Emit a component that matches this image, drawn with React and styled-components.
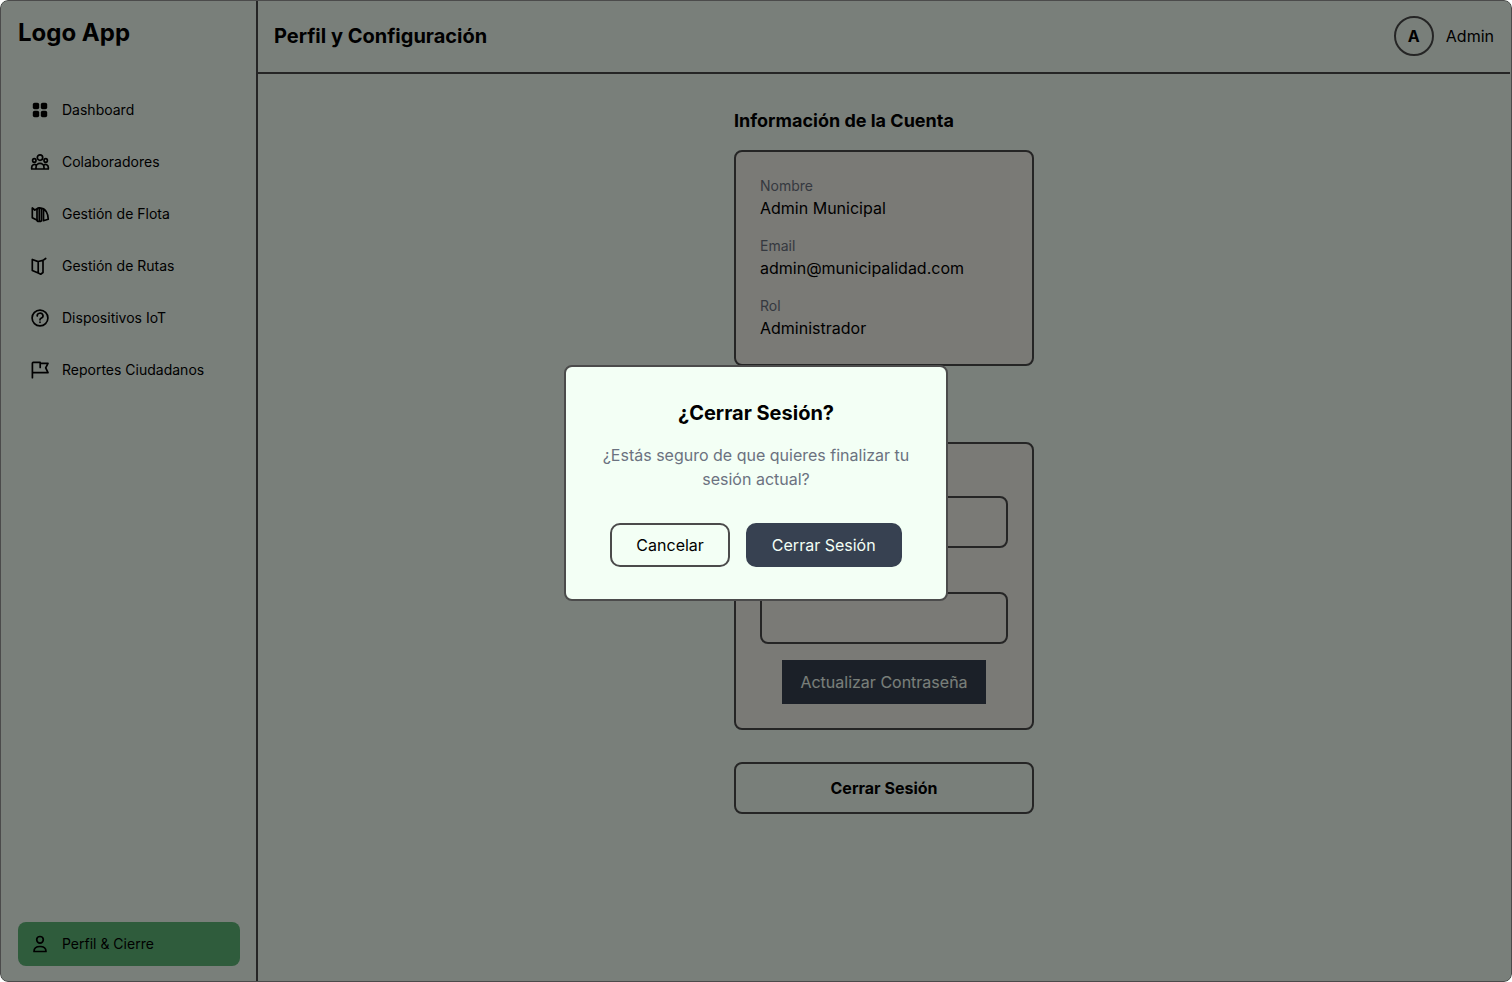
import React from 'react';
import styled, { createGlobalStyle, css } from 'styled-components';

const color = {
  surface: '#f3fff5',
  card: '#f5f4ec',
  line: '#4b4b4b',
  ink: '#000000',
  muted: '#6b7280',
  primary: '#374151',
  active: '#5eb878',
};

const GlobalStyle = createGlobalStyle`
  *, *::before, *::after { box-sizing: border-box; }
  body {
    margin: 0;
    background: #ffffff;
    color: ${color.ink};
    font-family: Inter, "Liberation Sans", sans-serif;
    font-size: 16px;
    line-height: 24px;
  }
  h1, h2, p, dl, dd { margin: 0; }
  button, input { font: inherit; color: inherit; }
  button { cursor: pointer; }
`;

const Page = styled.div`
  position: relative;
  display: flex;
  min-height: 100vh;
  padding: 0 2px;
  background: ${color.surface};
  border-radius: 8px;
  overflow: hidden;
`;

const Sidebar = styled.aside`
  display: flex;
  flex-direction: column;
  flex: none;
  width: 256px;
  padding: 16px;
  border-right: 2px solid ${color.line};
`;

const Logo = styled.div`
  font-size: 24px;
  line-height: 34px;
  font-weight: 700;
`;

const Nav = styled.nav`
  display: flex;
  flex: 1;
  flex-direction: column;
  gap: 8px;
  margin-top: 38px;
`;

const NavLink = styled.a`
  display: flex;
  align-items: center;
  gap: 12px;
  padding: 12px;
  border-radius: 8px;
  color: inherit;
  font-size: 14px;
  line-height: 20px;
  text-decoration: none;
  ${({ $active }) => $active && css`
    margin-top: auto;
    background: ${color.active};
  `}
`;

const IconSvg = styled.svg`
  width: 20px;
  height: 20px;
  fill: none;
  stroke: currentColor;
  stroke-width: 1.7;
  stroke-linecap: round;
  stroke-linejoin: round;
`;

const Body = styled.div`
  display: flex;
  flex: 1;
  flex-direction: column;
`;

const Header = styled.header`
  display: flex;
  align-items: center;
  justify-content: space-between;
  padding: 16px;
  border-bottom: 2px solid ${color.line};
`;

const PageTitle = styled.h1`
  font-size: 20px;
  line-height: 28px;
  font-weight: 700;
`;

const Account = styled.div`
  display: flex;
  align-items: center;
  gap: 12px;
`;

const Avatar = styled.span`
  display: grid;
  place-items: center;
  width: 40px;
  height: 40px;
  border: 2px solid ${color.line};
  border-radius: 50%;
  font-weight: 700;
`;

const Content = styled.main`
  display: flex;
  flex-direction: column;
  gap: 32px;
  width: 300px;
  margin: 0 auto;
  padding: 32px 0;
`;

const Section = styled.section`
  display: flex;
  flex-direction: column;
  gap: 14px;
`;

const SectionTitle = styled.h2`
  font-size: 18px;
  line-height: 30px;
  font-weight: 700;
`;

const cardBox = css`
  display: flex;
  flex-direction: column;
  gap: 16px;
  padding: 24px;
  border: 2px solid ${color.line};
  border-radius: 8px;
  background: ${color.card};
`;

const DetailCard = styled.dl`${cardBox}`;
const FormCard = styled.form`${cardBox}`;

const DetailLabel = styled.dt`
  color: ${color.muted};
  font-size: 14px;
  line-height: 20px;
`;

const Field = styled.div`
  display: flex;
  flex-direction: column;
  gap: 8px;
`;

const FieldLabel = styled.label`
  font-size: 14px;
  line-height: 20px;
`;

const TextInput = styled.input`
  width: 100%;
  height: 52px;
  padding: 12px;
  border: 2px solid ${color.line};
  border-radius: 8px;
  background: transparent;
`;

const UpdateButton = styled.button`
  align-self: center;
  padding: 8px 16px;
  border: 2px solid ${color.primary};
  background: ${color.primary};
  color: ${color.surface};
`;

const LogoutButton = styled.button`
  padding: 12px 24px;
  border: 2px solid ${color.line};
  border-radius: 8px;
  background: transparent;
  font-weight: 700;
`;

const Overlay = styled.div`
  position: absolute;
  inset: 0;
  display: grid;
  place-items: center;
  padding-bottom: 16px;
  border: 1px solid ${color.line};
  border-radius: 8px;
  background: rgba(0, 0, 0, 0.5);
`;

const Dialog = styled.div`
  display: flex;
  flex-direction: column;
  width: 384px;
  padding: 32px;
  border: 2px solid ${color.line};
  border-radius: 8px;
  background: ${color.surface};
  text-align: center;
`;

const DialogTitle = styled.h2`
  font-size: 20px;
  line-height: 28px;
  font-weight: 700;
`;

const DialogText = styled.p`
  margin-top: 16px;
  color: ${color.muted};
`;

const DialogActions = styled.div`
  display: flex;
  justify-content: center;
  gap: 16px;
  margin-top: 32px;
`;

const DialogButton = styled.button`
  padding: 8px 24px;
  border: 2px solid ${({ $primary }) => ($primary ? color.primary : color.line)};
  border-radius: 10px;
  background: ${({ $primary }) => ($primary ? color.primary : 'transparent')};
  color: ${({ $primary }) => ($primary ? color.surface : color.ink)};
`;

const icons = {
  grid: (
    <g fill="currentColor" stroke="none">
      <rect x="2.8" y="2.8" width="6.400" height="6.400" rx="1.8" />
      <rect x="10.8" y="2.8" width="6.400" height="6.400" rx="1.8" />
      <rect x="2.8" y="10.8" width="6.400" height="6.400" rx="1.8" />
      <rect x="10.8" y="10.8" width="6.400" height="6.400" rx="1.8" />
    </g>
  ),
  people: (
    <>
      <circle cx="10" cy="5.600" r="2.700" />
      <circle cx="4.300" cy="8.400" r="1.700" />
      <circle cx="15.700" cy="8.400" r="1.700" />
      <path d="M6 17v-1.600a4 4 0 0 1 8 0V17M1.700 17v-1.800a2.700 2.700 0 0 1 4.500-2M18.300 17v-1.800a2.700 2.700 0 0 0-4.500-2M1.700 17h16.600" />
    </>
  ),
  fleet: (
    <>
      <path d="M4.800 6L2.300 4v9.700l5 2.600" />
      <rect x="7" y="3.800" width="4.500" height="13.700" rx="1.800" />
      <path d="M5 5.800L7.500 4.800M9.300 4.500v12.500M11.500 4.300c4 .3 6.800 5.500 6.800 10.900l-5 1.500M13.500 5.800v10.500" />
    </>
  ),
  routes: (
    <path d="M2.300 3.500v11l5.900 2.500V5.600zM8.200 5.500L13 4.400v12.100l-2.300 1.700-2.500-1.200M13 4.400l2.700-1.900" />
  ),
  help: (
    <>
      <circle cx="10" cy="10" r="7.900" />
      <path d="M7.200 8a2.900 2.600 0 1 1 4.300 2.100c-1 .5-1.500 1-1.500 1.700M10 14.200v.1" />
    </>
  ),
  flag: (
    <path d="M2.400 17.700V3.200a.8.8 0 0 1 .8-.8h7v5M10.200 3.300H18l-2.300 4.500L18 12.700H2.400" />
  ),
  user: (
    <>
      <circle cx="10" cy="5.800" r="3.300" />
      <path d="M4 17.500c0-3.400 2.500-5 6-5s6 1.600 6 5z" />
    </>
  ),
};

const Icon = ({ name }) => (
  <IconSvg viewBox="0 0 20 20" aria-hidden="true">{icons[name]}</IconSvg>
);

const navItems = [
  ['grid', 'Dashboard'],
  ['people', 'Colaboradores'],
  ['fleet', 'Gestión de Flota'],
  ['routes', 'Gestión de Rutas'],
  ['help', 'Dispositivos IoT'],
  ['flag', 'Reportes Ciudadanos'],
  ['user', 'Perfil & Cierre'],
];

const details = [
  ['Nombre', 'Admin Municipal'],
  ['Email', 'admin@municipalidad.com'],
  ['Rol', 'Administrador'],
];

export default function App() {
  return (
    <>
      <GlobalStyle />
      <Page>
        <Sidebar>
          <Logo>Logo App</Logo>
          <Nav>
            {navItems.map(([icon, label]) => (
              <NavLink key={label} href="#" $active={icon === 'user'}>
                <Icon name={icon} />
                {label}
              </NavLink>
            ))}
          </Nav>
        </Sidebar>
        <Body>
          <Header>
            <PageTitle>Perfil y Configuración</PageTitle>
            <Account>
              <Avatar>A</Avatar>
              <span>Admin</span>
            </Account>
          </Header>
          <Content>
            <Section>
              <SectionTitle>Información de la Cuenta</SectionTitle>
              <DetailCard>
                {details.map(([label, value]) => (
                  <div key={label}>
                    <DetailLabel>{label}</DetailLabel>
                    <dd>{value}</dd>
                  </div>
                ))}
              </DetailCard>
            </Section>
            <Section>
              <SectionTitle>Seguridad</SectionTitle>
              <FormCard>
                <Field>
                  <FieldLabel htmlFor="current">Contraseña Actual</FieldLabel>
                  <TextInput id="current" type="password" />
                </Field>
                <Field>
                  <FieldLabel htmlFor="next">Nueva Contraseña</FieldLabel>
                  <TextInput id="next" type="password" />
                </Field>
                <UpdateButton type="button">Actualizar Contraseña</UpdateButton>
              </FormCard>
            </Section>
            <LogoutButton type="button">Cerrar Sesión</LogoutButton>
          </Content>
        </Body>
        <Overlay>
          <Dialog role="dialog" aria-modal="true" aria-labelledby="logout-title">
            <DialogTitle id="logout-title">¿Cerrar Sesión?</DialogTitle>
            <DialogText>¿Estás seguro de que quieres finalizar tu sesión actual?</DialogText>
            <DialogActions>
              <DialogButton type="button">Cancelar</DialogButton>
              <DialogButton type="button" $primary>Cerrar Sesión</DialogButton>
            </DialogActions>
          </Dialog>
        </Overlay>
      </Page>
    </>
  );
}
